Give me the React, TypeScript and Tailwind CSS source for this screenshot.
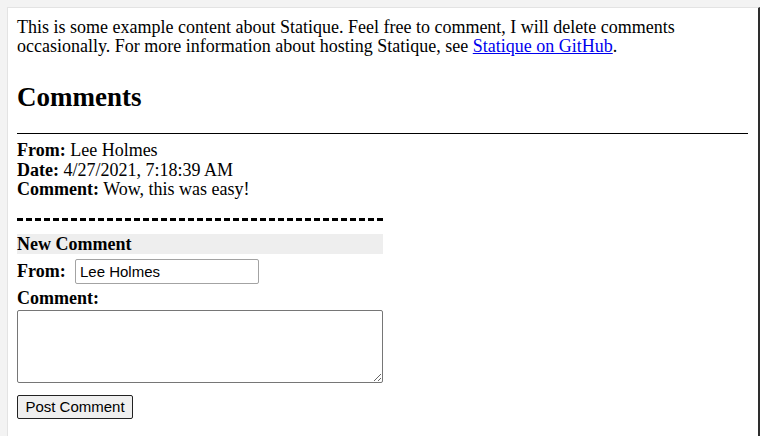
import React from 'react';

const App: React.FC = () => {
  return (
    <div className="h-[436px] w-[760px] overflow-hidden bg-[#f3f3f3] pl-[7px] pt-[7px] font-['Liberation_Serif',serif] text-black">
      <div className="h-[440px] border-l border-t border-[#e3e3e3] border-r-2 border-r-[#2e2e2e] bg-white pl-[9px] pr-[10px] pt-[10px] text-[18px] leading-[19px]">
        <p>
          This is some example content about Statique. Feel free to comment, I will delete comments
          occasionally. For more information about hosting Statique, see{' '}
          <a href="#" className="text-[#0000ee] underline">
            Statique on GitHub
          </a>
          .
        </p>

        <h2 className="mt-[26px] text-[27px] font-bold leading-[30px]">Comments</h2>
        <hr className="mt-[21px] border-t border-black" />

        {/* existing comments */}
        <div className="mt-[7px] leading-[19.5px]">
          <div>
            <b>From:</b> Lee Holmes
          </div>
          <div>
            <b>Date:</b> 4/27/2021, 7:18:39 AM
          </div>
          <div>
            <b>Comment:</b> Wow, this was easy!
          </div>
        </div>

        {/* new comment form */}
        <form className="w-[366px]" onSubmit={(e) => e.preventDefault()}>
          <div className="mt-[18px] h-[3px] bg-[repeating-linear-gradient(90deg,#000_0_6px,transparent_6px_9px)]" />
          <div className="mt-[13px] h-[20px] bg-[#eeeeee] font-bold leading-[20px]">New Comment</div>

          <div className="mt-[5px] flex h-[25px] items-center">
            <label className="w-[58px] font-bold">From:</label>
            <input
              defaultValue="Lee Holmes"
              className="h-[25px] w-[184px] rounded-[2px] border border-[#a3a3a3] px-[4px] font-['Liberation_Sans',sans-serif] text-[15px] outline-none"
            />
          </div>

          <div className="mt-[4px] h-[20px] font-bold leading-[20px]">Comment:</div>
          <textarea className="mt-[2px] block h-[73px] w-[366px] rounded-[2px] border border-[#767676] outline-none" />

          <button
            type="submit"
            className="mt-[12px] block h-[24px] w-[116px] rounded-[2px] border border-[#222] bg-[#efefef] font-['Liberation_Sans',sans-serif] text-[15px] leading-[20px]"
          >
            Post Comment
          </button>
        </form>
      </div>
    </div>
  );
};

export default App;
